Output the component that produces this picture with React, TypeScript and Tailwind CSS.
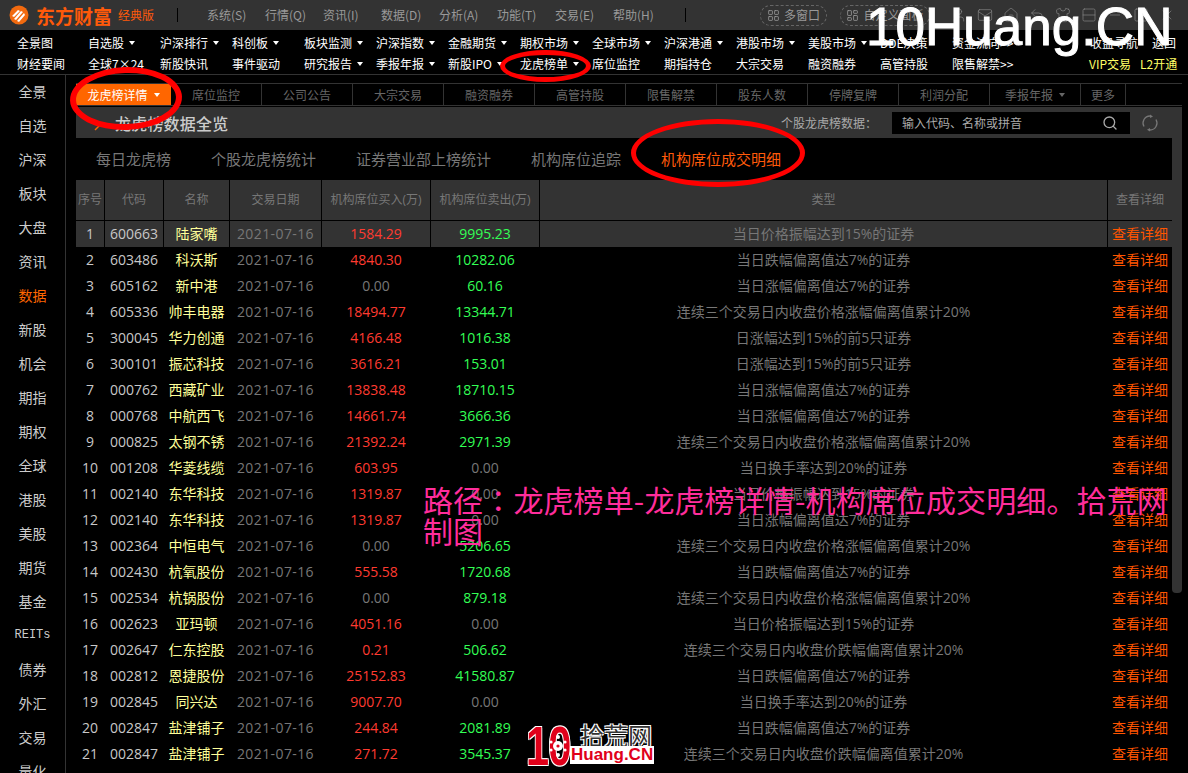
import React from 'react';
import { LayoutGrid, LayoutDashboard, User, Mail, Home, Undo2, Shirt, Minus, Square, X, Search, Rows2 } from 'lucide-react';

const CJK = 'font-["Noto_Sans_CJK_SC",sans-serif]';
const NUM = 'font-["Open_Sans","Noto_Sans_CJK_SC",sans-serif]';
const OUTLINE = '[text-shadow:1px_1px_0_#fff,-1px_-1px_0_#fff,1px_-1px_0_#fff,-1px_1px_0_#fff]';

const topMenu = ['系统(S)', '行情(Q)', '资讯(I)', '数据(D)', '分析(A)', '功能(T)', '交易(E)', '帮助(H)'];

const menuRow1: [string, boolean][] = [
  ['自选股', true], ['沪深排行', true], ['科创板', true], ['板块监测', true], ['沪深指数', true], ['金融期货', true],
  ['期权市场', true], ['全球市场', true], ['沪深港通', true], ['港股市场', true], ['美股市场', true], ['DDE决策', false],
];
const menuRow2: [string, boolean][] = [
  ['全球7×24', false], ['新股快讯', false], ['事件驱动', false], ['研究报告', true], ['季报年报', true], ['新股IPO', true],
  ['龙虎榜单', true], ['席位监控', false], ['期指持仓', false], ['大宗交易', false], ['融资融券', false], ['高管持股', false],
];

const sideItems = ['全景', '自选', '沪深', '板块', '大盘', '资讯', '数据', '新股', '机会', '期指', '期权', '全球', '港股', '美股', '期货', '基金', 'REITs', '债券', '外汇', '交易', '量化'];

const tabs = ['席位监控', '公司公告', '大宗交易', '融资融券', '高管持股', '限售解禁', '股东人数', '停牌复牌', '利润分配'];

const subTabs = ['每日龙虎榜', '个股龙虎榜统计', '证券营业部上榜统计', '机构席位追踪'];

const T = {
  zhen: '当日价格振幅达到15%的证券',
  die: '当日跌幅偏离值达7%的证券',
  zhang: '当日涨幅偏离值达7%的证券',
  lianZhang: '连续三个交易日内收盘价格涨幅偏离值累计20%',
  lianDie: '连续三个交易日内收盘价跌幅偏离值累计20%',
  five: '日涨幅达到15%的前5只证券',
  huan: '当日换手率达到20%的证券',
};

const rows: [string, string, string, string, string][] = [
  ['600663', '陆家嘴', '1584.29', '9995.23', T.zhen],
  ['603486', '科沃斯', '4840.30', '10282.06', T.die],
  ['605162', '新中港', '0.00', '60.16', T.zhang],
  ['605336', '帅丰电器', '18494.77', '13344.71', T.lianZhang],
  ['300045', '华力创通', '4166.48', '1016.38', T.five],
  ['300101', '振芯科技', '3616.21', '153.01', T.five],
  ['000762', '西藏矿业', '13838.48', '18710.15', T.zhang],
  ['000768', '中航西飞', '14661.74', '3666.36', T.zhang],
  ['000825', '太钢不锈', '21392.24', '2971.39', T.lianZhang],
  ['001208', '华菱线缆', '603.95', '0.00', T.huan],
  ['002140', '东华科技', '1319.87', '0.00', T.zhen],
  ['002140', '东华科技', '1319.87', '0.00', T.zhang],
  ['002364', '中恒电气', '0.00', '5206.65', T.lianZhang],
  ['002430', '杭氧股份', '555.58', '1720.68', T.die],
  ['002534', '杭锅股份', '0.00', '879.18', T.lianZhang],
  ['002623', '亚玛顿', '4051.16', '0.00', T.zhen],
  ['002647', '仁东控股', '0.21', '506.62', T.lianDie],
  ['002812', '恩捷股份', '25152.83', '41580.87', T.die],
  ['002845', '同兴达', '9007.70', '0.00', T.huan],
  ['002847', '盐津铺子', '244.84', '2081.89', T.die],
  ['002847', '盐津铺子', '271.72', '3545.37', T.lianDie],
];

const COLS = 'grid grid-cols-[28px_59px_66px_92px_109px_109px_568px_65px]';

function Caret({ className = 'border-t-white' }: { className?: string }) {
  return <span className={`inline-block w-0 h-0 border-x-[3px] border-x-transparent border-t-[4px] ${className}`} />;
}

function LogoMark() {
  return (
    <svg width="20" height="20" viewBox="0 0 20 20">
      <circle cx="10" cy="10" r="9.5" fill="#f26a0f" />
      <path d="M3 11 L9 5 L11 6 L5 12 Z M5 14 L12 6 L14 7 L7 15 Z M8 16 L15 8 L16 10 L10 17 Z" fill="#fff" />
    </svg>
  );
}

function TopBar() {
  return (
    <div className={`h-[30px] bg-[#333] flex items-center relative text-[12px] text-[#999] ${CJK}`}>
      <div className="w-[36px] pl-[9px] shrink-0"><LogoMark /></div>
      <span className="w-[82px] shrink-0 text-[19px] font-bold text-[#ff5a0a] leading-none">东方财富</span>
      <span className="w-[59px] shrink-0 text-[12px] text-[#ff5a0a]">经典版</span>
      <span className="w-px h-[14px] bg-black mr-[29px]" />
      <div className="flex">
        {topMenu.map((m) => (
          <span key={m} className="w-[58px]">{m}</span>
        ))}
      </div>
      <span className="w-px h-[14px] bg-black ml-[14px] mr-[74px]" />
      <div className="w-[67px] h-[21px] rounded-full border border-dashed border-[#666] flex items-center justify-center gap-1 mr-[13px]">
        <LayoutGrid size={13} strokeWidth={1.5} />
        <span>多窗口</span>
      </div>
      <div className="w-[90px] h-[21px] rounded-full border border-dashed border-[#666] flex items-center justify-center gap-1 mr-[21px]">
        <LayoutDashboard size={13} strokeWidth={1.5} />
        <span>自定义面板</span>
      </div>
      <div className="flex items-center gap-[10px] text-[#888]">
        <User size={16} strokeWidth={1} />
        <Mail size={16} strokeWidth={1} />
        <Home size={16} strokeWidth={1} />
        <Undo2 size={16} strokeWidth={1} />
        <Shirt size={16} strokeWidth={1} />
        <Rows2 size={16} strokeWidth={1} />
        <Minus size={16} strokeWidth={1} />
        <Square size={16} strokeWidth={1} />
        <X size={16} strokeWidth={1} />
      </div>
    </div>
  );
}

function MenuRow({ first, items, children }: { first: string; items: [string, boolean][]; children: React.ReactNode }) {
  return (
    <div className="flex h-[21px] items-center pl-[17px]">
      <span className="w-[71px] shrink-0">{first}</span>
      {items.map(([label, caret]) => (
        <span key={label} className="w-[72px] shrink-0 flex items-center gap-[5px]">
          {label}
          {caret && <Caret />}
        </span>
      ))}
      {children}
    </div>
  );
}

function MenuBar() {
  return (
    <div className={`h-[45px] pt-[2px] bg-black border-b border-[#333] text-[12px] text-white ${CJK}`}>
      <MenuRow first="全景图" items={menuRow1}>
        <span className="w-[138px] shrink-0">资金流向&gt;&gt;</span>
        <span className="w-[62px] shrink-0">收盘寻航</span>
        <span>返回</span>
      </MenuRow>
      <MenuRow first="财经要闻" items={menuRow2}>
        <span className="w-[137px] shrink-0">限售解禁&gt;&gt;</span>
        <span className="w-[51px] shrink-0 text-[#ffff66]">VIP交易</span>
        <span className="text-[#ffff66]">L2开通</span>
      </MenuRow>
    </div>
  );
}

function Sidebar() {
  return (
    <div className={`w-[66px] shrink-0 border-r border-[#333] flex flex-col items-center text-[14px] text-[#ccc] ${CJK}`}>
      {sideItems.map((s) => (
        <div
          key={s}
          className={`h-[34px] pb-[2px] shrink-0 flex items-center ${s === '数据' ? 'text-[#ff6600]' : ''} ${s === 'REITs' ? 'text-[12px] font-["Liberation_Mono",monospace]' : ''}`}
        >
          {s}
        </div>
      ))}
    </div>
  );
}

function TabBar() {
  return (
    <div className={`flex h-[23px] border-y border-[#333] text-[12px] text-[#666] ${CJK}`}>
      <div className="w-[95px] bg-[#ff6600] text-white flex items-center justify-center gap-[6px]">
        龙虎榜详情
        <Caret />
      </div>
      {tabs.map((t) => (
        <div key={t} className="w-[91px] border-r border-[#333] flex items-center justify-center">{t}</div>
      ))}
      <div className="w-[91px] border-r border-[#333] flex items-center justify-center gap-[6px]">
        季报年报
        <Caret className="border-t-[#666]" />
      </div>
      <div className="w-[45px] border-r border-[#333] flex items-center justify-center">更多</div>
    </div>
  );
}

function RefreshIcon() {
  return (
    <svg width="18" height="18" viewBox="0 0 18 18" fill="none" className="ml-[11px]">
      <path d="M3 12.5 A7 7 0 0 1 9 2" stroke="#777" strokeWidth="1.3" />
      <path d="M15 5.5 A7 7 0 0 1 9 16" stroke="#777" strokeWidth="1.3" />
      <path d="M9 0.5 L12 2.5 L9 4 Z M9 14 L6 15.8 L9 17.5 Z" fill="#777" />
    </svg>
  );
}

function TitleBar() {
  return (
    <div className={`h-[31px] bg-[#333] flex items-center pl-[18px] ${CJK}`}>
      <svg width="10" height="10" viewBox="0 0 10 10" className="mr-[11px] mt-[6px]">
        <path d="M1 9 L8 2" stroke="#ff6600" strokeWidth="1.4" fill="none" />
      </svg>
      <span className="w-[666px] text-[16px] font-medium tracking-[0.2px] text-[#ccc]">龙虎榜数据全览</span>
      <span className="w-[111px] text-[12px] text-[#aaa]">个股龙虎榜数据：</span>
      <div className="w-[238px] h-[22px] bg-black flex items-center justify-between pl-[10px] pr-[12px] text-[12px] text-[#aaa]">
        输入代码、名称或拼音
        <Search size={16} strokeWidth={2} className="text-[#aaa]" />
      </div>
      <RefreshIcon />
    </div>
  );
}

function SubTabs() {
  return (
    <div className={`h-[42px] bg-black flex items-center gap-[40px] pl-[20px] text-[15px] text-[#777] ${CJK}`}>
      {subTabs.map((t) => (
        <span key={t}>{t}</span>
      ))}
      <span className="text-[#ff5a0a]">机构席位成交明细</span>
    </div>
  );
}

function DataTable() {
  const head = ['序号', '代码', '名称', '交易日期', '机构席位买入(万)', '机构席位卖出(万)', '类型', '查看详细'];
  return (
    <div className={`${NUM} text-[14px]`}>
      <div className={`${COLS} h-[41px] bg-[#333] border-b border-black text-[12px] text-[#777]`}>
        {head.map((h) => (
          <div key={h} className="flex items-center justify-center border-l border-black first:border-l-0">{h}</div>
        ))}
      </div>
      {rows.map((r, i) => {
        const selected = i === 0;
        const cell = `flex items-center justify-center pb-[2px] ${selected ? 'border-l border-black first:border-l-0' : 'border-l border-transparent first:border-l-0'}`;
        return (
          <div key={i} className={`${COLS} h-[26px] ${selected ? 'bg-[#333]' : 'bg-black'}`}>
            <div className={`${cell} text-[#c8c8c8]`}>{i + 1}</div>
            <div className={`${cell} text-[#c8c8c8]`}>{r[0]}</div>
            <div className={`${cell} text-[#ffff99]`}>{r[1]}</div>
            <div className={`${cell} tracking-[0.4px] text-[#777]`}>2021-07-16</div>
            <div className={`${cell} ${r[2] === '0.00' ? 'text-[#777]' : 'text-[#ff3b30]'}`}>{r[2]}</div>
            <div className={`${cell} ${r[3] === '0.00' ? 'text-[#777]' : 'text-[#33ff55]'}`}>{r[3]}</div>
            <div className={`${cell} text-[#777]`}>{r[4]}</div>
            <div className={`${cell} text-[#ff5500]`}>查看详细</div>
          </div>
        );
      })}
    </div>
  );
}

function BrandBadge() {
  return (
    <div className="absolute left-[525px] top-[725px] w-[131px] h-[42px]">
      <div className={`absolute left-[1px] top-0 origin-left scale-x-[0.74] text-[56px] leading-[42px] font-bold tracking-[-1px] text-[#e0001a] font-["Liberation_Sans",sans-serif] ${OUTLINE}`}>
        10
      </div>
      <svg width="22" height="28" viewBox="0 0 22 26" className="absolute left-[22px] top-[7px]">
        <circle cx="11" cy="13" r="5" fill="#fff" />
        <circle cx="11" cy="4" r="2" fill="#fff" />
        <circle cx="11" cy="22" r="2" fill="#fff" />
        <circle cx="4" cy="9" r="1.6" fill="#fff" />
        <circle cx="18" cy="9" r="1.6" fill="#fff" />
        <circle cx="4" cy="17" r="1.6" fill="#fff" />
        <circle cx="18" cy="17" r="1.6" fill="#fff" />
        <circle cx="11" cy="13" r="1.6" fill="#e0001a" />
      </svg>
      <span className={`absolute left-[55px] top-[-3px] text-[24px] leading-[26px] whitespace-nowrap text-[#333] ${OUTLINE} ${CJK}`}>拾荒网</span>
      <span className='absolute left-[45px] top-[21px] whitespace-nowrap bg-white px-px text-[17px] leading-[18px] font-bold text-[#e0001a] font-["Liberation_Sans",sans-serif]'>Huang.CN</span>
    </div>
  );
}

export default function App() {
  return (
    <div className="relative w-[1188px] h-[773px] overflow-hidden bg-black flex flex-col">
      <TopBar />
      <MenuBar />
      <div className="flex flex-1 min-h-0">
        <Sidebar />
        <div className="pl-[10px] pt-[8px]">
          <TabBar />
          <div className="mt-px flex items-start">
            <div className="w-[1096px]">
              <TitleBar />
              <SubTabs />
              <DataTable />
            </div>
            <div className="w-[10px] h-[486px] bg-[#333] rounded-b-sm" />
          </div>
        </div>
      </div>

      {/* red marker circles drawn on top of the screenshot */}
      <div className="absolute left-[70px] top-[67px] w-[112px] h-[63px] rounded-[50%] border-[6px] border-[#f00] -rotate-2" />
      <div className="absolute left-[500px] top-[50px] w-[91px] h-[32px] rounded-[50%] border-[5px] border-[#f00]" />
      <div className="absolute left-[631px] top-[119px] w-[174px] h-[68px] rounded-[50%] border-[5px] border-[#f00]" />

      {/* site watermarks */}
      <div className='absolute left-[866px] top-0 text-[53px] leading-[54px] whitespace-nowrap text-white [-webkit-text-stroke:1px_white] font-["Liberation_Sans",sans-serif]'>
        10Huang.CN
      </div>
      <div className={`absolute left-[423px] top-[484px] w-[750px] text-[30px] leading-[31px] tracking-[0.12px] text-[#ff2d9b] ${CJK}`}>
        路径<span className='font-["Noto_Sans_CJK_TC",sans-serif]'>：</span>龙虎榜单-龙虎榜详情-机构席位成交明细。拾荒网制图
      </div>
      <BrandBadge />
    </div>
  );
}
